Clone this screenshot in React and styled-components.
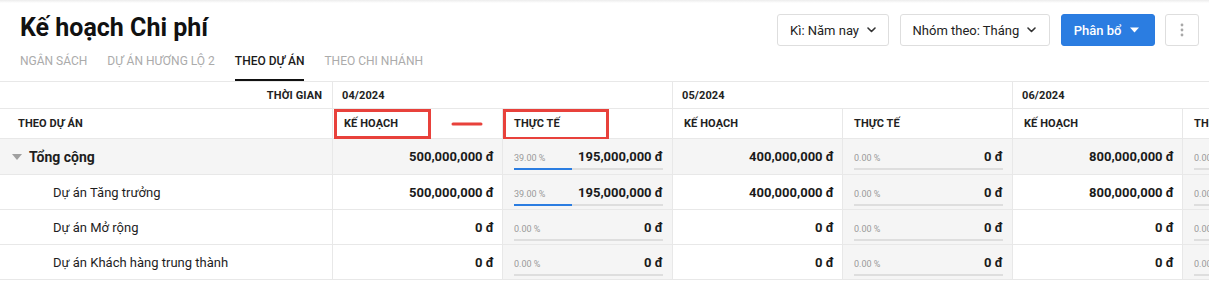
import React from 'react';
import styled, { createGlobalStyle } from 'styled-components';

const Global = createGlobalStyle`
  html, body { margin: 0; padding: 0; background: #fff; }
  body {
    font-family: Roboto, "Noto Sans", "Liberation Sans", sans-serif;
    color: #222;
    width: 1209px;
    height: 282px;
    overflow: hidden;
  }
  * { box-sizing: border-box; }
`;

const Page = styled.div`
  width: 1209px;
  overflow: hidden;
`;

const TopShade = styled.div`
  height: 3px;
  background: linear-gradient(#ececec, #fff);
`;

const Header = styled.div`
  padding: 11px 10px 0 20px;
`;

const HeaderTop = styled.div`
  display: flex;
  justify-content: space-between;
  align-items: flex-start;
  height: 32px;
`;

const Title = styled.h1`
  margin: 0;
  font-size: 25px;
  line-height: 28px;
  font-weight: 700;
  color: #111;
`;

const Actions = styled.div`
  display: flex;
  gap: 10.5px;
`;

const Button = styled.button`
  height: 32px;
  display: flex;
  align-items: center;
  gap: 8px;
  padding: 0 ${(p) => p.$pr ?? 12}px 0 12px;
  border-radius: 3px;
  border: 1px solid ${(p) => (p.$primary ? '#2a7be0' : '#dedede')};
  background: ${(p) => (p.$primary ? '#2b7de1' : '#fff')};
  color: ${(p) => (p.$primary ? '#fff' : '#222')};
  font-family: inherit;
  font-size: 13px;
  font-weight: ${(p) => (p.$primary ? 500 : 400)};
  cursor: pointer;
`;

const MoreButton = styled(Button)`
  width: 34px;
  padding: 0;
  justify-content: center;
`;

const Tabs = styled.div`
  display: flex;
  gap: 20px;
  margin-top: 7px;
`;

const Tab = styled.div`
  font-size: 12px;
  line-height: 16px;
  text-transform: uppercase;
  padding-bottom: 10px;
  color: ${(p) => (p.$active ? '#1a1a1a' : '#ababab')};
  font-weight: ${(p) => (p.$active ? 500 : 400)};
  border-bottom: 2px solid ${(p) => (p.$active ? '#111' : 'transparent')};
`;

const Table = styled.div`
  border-top: 1px solid #e8e8e8;
  width: 1353px;
`;

const rowHeights = { time: 27, cols: 30, total: 36, data: 35 };

const Row = styled.div`
  display: flex;
  height: ${(p) => rowHeights[p.$kind]}px;
  border-bottom: 1px solid #e8e8e8;
  background: ${(p) => (p.$kind === 'total' ? '#f5f5f5' : '#fff')};
`;

const Cell = styled.div`
  position: relative;
  flex: none;
  width: ${(p) => p.$w}px;
  height: 100%;
  border-right: 1px solid #e8e8e8;
  display: flex;
  align-items: center;
  justify-content: ${(p) => p.$justify || 'flex-start'};
  padding: 0 ${(p) => p.$pr ?? 10}px 0 ${(p) => p.$pl ?? 10}px;
  background: ${(p) => (p.$tinted ? '#f5f5f5' : 'transparent')};
`;

const HeadText = styled.span`
  font-size: 11px;
  font-weight: 700;
  text-transform: uppercase;
  color: #222;
  letter-spacing: 0.1px;
`;

const Label = styled.span`
  font-size: ${(p) => (p.$bold ? 14 : 13)}px;
  font-weight: ${(p) => (p.$bold ? 700 : 400)};
  color: #1e1e1e;
`;

const Caret = styled.span`
  width: 0;
  height: 0;
  border-left: 5px solid transparent;
  border-right: 5px solid transparent;
  border-top: 6px solid #a0a0a0;
  margin-right: 7px;
`;

const Amount = styled.span`
  font-size: 13px;
  font-weight: 700;
  color: #1a1a1a;
`;

const ActualCell = styled(Cell)`
  flex-direction: column;
  align-items: stretch;
  justify-content: flex-start;
  padding: 10px 9px 0 11px;
`;

const ActualLine = styled.div`
  display: flex;
  justify-content: space-between;
  align-items: baseline;
  height: 16px;
  line-height: 16px;
`;

const Percent = styled.span`
  font-size: 9px;
  color: #9a9a9a;
`;

const Track = styled.div`
  margin-top: 3px;
  height: 2px;
  background: #dedede;
`;

const Fill = styled.div`
  height: 100%;
  background: #2b7de1;
`;

const Annotation = styled.div`
  position: absolute;
  left: ${(p) => p.$left}px;
  top: ${(p) => p.$top}px;
  width: ${(p) => p.$width}px;
  height: ${(p) => p.$height}px;
  border: 3px solid #e8413b;
  pointer-events: none;
`;

const ArrowMark = styled.svg`
  position: absolute;
  left: 118px;
  top: 12px;
`;

const Chevron = () => (
  <svg width="9" height="6" viewBox="0 0 9 6">
    <polyline points="1,1 4.5,4.5 8,1" fill="none" stroke="#333" strokeWidth="1.6" strokeLinecap="round" strokeLinejoin="round" />
  </svg>
);

const DropTriangle = () => (
  <svg width="9" height="6" viewBox="0 0 9 6">
    <polygon points="0,0.5 9,0.5 4.5,5.5" fill="#fff" />
  </svg>
);

const Dots = () => (
  <svg width="4" height="14" viewBox="0 0 4 14">
    <circle cx="2" cy="2" r="1.4" fill="#a8a8a8" />
    <circle cx="2" cy="7" r="1.4" fill="#a8a8a8" />
    <circle cx="2" cy="12" r="1.4" fill="#a8a8a8" />
  </svg>
);

const months = ['04/2024', '05/2024', '06/2024'];

const rows = [
  {
    name: 'Tổng cộng',
    total: true,
    values: [
      { plan: '500,000,000 đ', actual: '195,000,000 đ', pct: 39 },
      { plan: '400,000,000 đ', actual: '0 đ', pct: 0 },
      { plan: '800,000,000 đ', actual: '0 đ', pct: 0 },
    ],
  },
  {
    name: 'Dự án Tăng trưởng',
    values: [
      { plan: '500,000,000 đ', actual: '195,000,000 đ', pct: 39 },
      { plan: '400,000,000 đ', actual: '0 đ', pct: 0 },
      { plan: '800,000,000 đ', actual: '0 đ', pct: 0 },
    ],
  },
  {
    name: 'Dự án Mở rộng',
    values: [
      { plan: '0 đ', actual: '0 đ', pct: 0 },
      { plan: '0 đ', actual: '0 đ', pct: 0 },
      { plan: '0 đ', actual: '0 đ', pct: 0 },
    ],
  },
  {
    name: 'Dự án Khách hàng trung thành',
    values: [
      { plan: '0 đ', actual: '0 đ', pct: 0 },
      { plan: '0 đ', actual: '0 đ', pct: 0 },
      { plan: '0 đ', actual: '0 đ', pct: 0 },
    ],
  },
];

const FIRST = 333;
const COL = 170;

export default function App() {
  return (
    <Page>
      <Global />
      <TopShade />
      <Header>
        <HeaderTop>
          <Title>Kế hoạch Chi phí</Title>
          <Actions>
            <Button>
              Kì: Năm nay <Chevron />
            </Button>
            <Button $pr={13}>
              Nhóm theo: Tháng <Chevron />
            </Button>
            <Button $primary $pr={15}>
              Phân bổ <DropTriangle />
            </Button>
            <MoreButton>
              <Dots />
            </MoreButton>
          </Actions>
        </HeaderTop>
        <Tabs>
          <Tab>Ngân sách</Tab>
          <Tab>Dự án Hương lộ 2</Tab>
          <Tab $active>Theo dự án</Tab>
          <Tab>Theo chi nhánh</Tab>
        </Tabs>
      </Header>

      <Table>
        <Row $kind="time">
          <Cell $w={FIRST} $justify="flex-end">
            <HeadText>Thời gian</HeadText>
          </Cell>
          {months.map((m) => (
            <Cell key={m} $w={COL * 2} $pl={9}>
              <HeadText>{m}</HeadText>
            </Cell>
          ))}
        </Row>

        <Row $kind="cols">
          <Cell $w={FIRST} $pl={18}>
            <HeadText>Theo dự án</HeadText>
          </Cell>
          {months.map((m, i) => (
            <React.Fragment key={m}>
              <Cell $w={COL} $pl={11}>
                <HeadText>Kế hoạch</HeadText>
                {i === 0 && (
                  <>
                    <Annotation $left={1} $top={0} $width={97} $height={30} />
                    <ArrowMark width="32" height="6" viewBox="0 0 32 6">
                      <line x1="2" y1="3" x2="30" y2="3" stroke="#e8413b" strokeWidth="3" strokeLinecap="round" />
                    </ArrowMark>
                  </>
                )}
              </Cell>
              <Cell $w={COL} $pl={11}>
                <HeadText>Thực tế</HeadText>
                {i === 0 && <Annotation $left={0} $top={0} $width={106} $height={31} />}
              </Cell>
            </React.Fragment>
          ))}
        </Row>

        {rows.map((r) => (
          <Row key={r.name} $kind={r.total ? 'total' : 'data'}>
            <Cell $w={FIRST} $pl={r.total ? 12 : 53}>
              {r.total && <Caret />}
              <Label $bold={r.total}>{r.name}</Label>
            </Cell>
            {r.values.map((v, i) => (
              <React.Fragment key={i}>
                <Cell $w={COL} $justify="flex-end" $pr={8}>
                  <Amount>{v.plan}</Amount>
                </Cell>
                <ActualCell $w={COL} $tinted>
                  <ActualLine>
                    <Percent>{v.pct.toFixed(2)} %</Percent>
                    <Amount>{v.actual}</Amount>
                  </ActualLine>
                  <Track>
                    <Fill style={{ width: `${v.pct}%` }} />
                  </Track>
                </ActualCell>
              </React.Fragment>
            ))}
          </Row>
        ))}
      </Table>
    </Page>
  );
}
